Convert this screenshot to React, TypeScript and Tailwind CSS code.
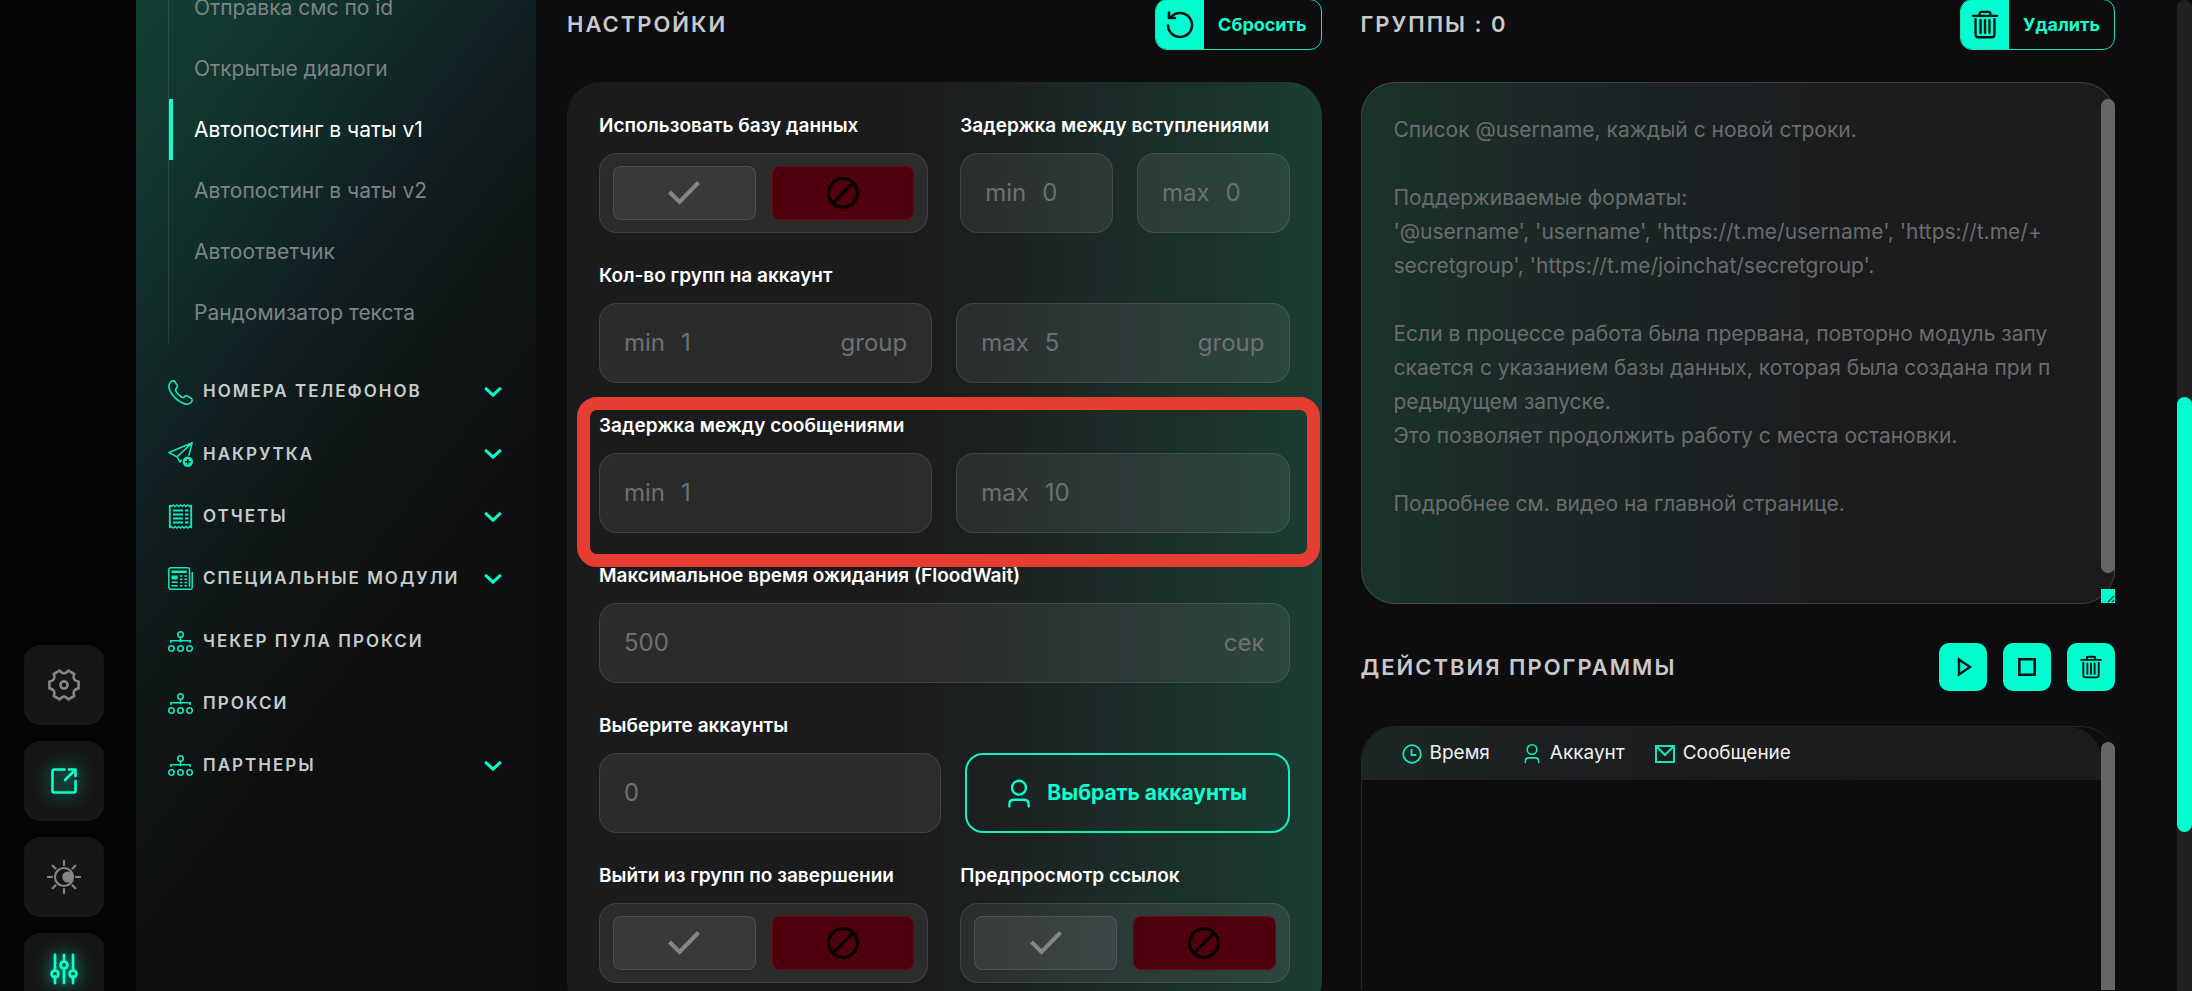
import { useState } from "react";
import type { ReactNode } from "react";

type IconProps = { className?: string };

type MenuEntry = {
  label: string;
  icon: ReactNode;
  expandable: boolean;
};

const SUB_ITEMS = [
  "Отправка смс по id",
  "Открытые диалоги",
  "Автопостинг в чаты v1",
  "Автопостинг в чаты v2",
  "Автоответчик",
  "Рандомизатор текста",
];

const GROUPS_PLACEHOLDER = `Список @username, каждый с новой строки.

Поддерживаемые форматы:
'@username', 'username', 'https://t.me/username', 'https://t.me/+
secretgroup', 'https://t.me/joinchat/secretgroup'.

Если в процессе работа была прервана, повторно модуль запу
скается с указанием базы данных, которая была создана при п
редыдущем запуске.
Это позволяет продолжить работу с места остановки.

Подробнее см. видео на главной странице.`;

function PhoneIcon() {
  return (
    <svg aria-hidden="true" className="size-[25px]" viewBox="0 0 25 25" fill="none" stroke="currentColor" strokeWidth="1.6" strokeLinejoin="round">
      <path d="M2.6 2.2C4 .6 6 .4 7 1.8l2 3.4c.7 1.2.3 2.3-.7 3.1-1.100.9-1 1.800-.3 3.100 1.300 2.300 3.200 4.200 5.500 5.600 1.300.8 2.200.8 3-.3.8-1 2-1.300 3.100-.6l3.400 2.100c1.500 1 1.400 2.900 0 4.300-2 2-5 2.200-8.400.5C9.400 20.600 4.300 15.500 1.800 10.300.2 6.900.7 4.300 2.600 2.200z" />
    </svg>
  );
}

function PlaneIcon() {
  return (
    <svg aria-hidden="true" className="size-[25px]" viewBox="0 0 25 25" fill="none" stroke="currentColor" strokeWidth="1.5" strokeLinejoin="round">
      <path d="M24.2.8 1 10.5l8 4.4L24.2.8zM24.2.8 9 14.9l3 5.3 1.5-2.6M24.2.8l-3.4 13" />
      <circle cx="19.8" cy="19.8" r="5.2" fill="currentColor" stroke="none" />
      <path d="M19.8 17v5.6M17 19.8h5.6" stroke="#101a1b" />
    </svg>
  );
}

function ReportIcon() {
  return (
    <svg aria-hidden="true" className="size-[25px]" viewBox="0 0 25 25" fill="none" stroke="currentColor" strokeWidth="1.4">
      <path d="M1.8 1v23M23.2 1v23" strokeWidth="1.8" />
      <path d="m1.5 1 1.8 1.5L5.2 1 7 2.500 8.900 1l1.800 1.500L12.500 1l1.800 1.500L16.100 1l1.800 1.500L19.800 1l1.800 1.500L23.500 1M1.500 24l1.800-1.500L5.200 24 7 22.500 8.900 24l1.800-1.500 1.800 1.500 1.800-1.500 1.800 1.500 1.800-1.500 1.900 1.500 1.800-1.500 1.900 1.500" />
      <path d="M5 6.500h10M5 10.500h10M5 14.500h10M5 18.500h10M17 6.500h3.500M17 10.500h3.500M17 14.500h3.500M17 18.500h3.500" strokeWidth="2" />
    </svg>
  );
}

function NewsIcon() {
  return (
    <svg aria-hidden="true" className="size-[25px]" viewBox="0 0 25 25" fill="none" stroke="currentColor" strokeWidth="1.5">
      <path d="M21.5 21V3.5a1.7 1.7 0 0 0-1.7-1.7H2.5A1.7 1.7 0 0 0 .8 3.5V21A2.2 2.2 0 0 0 3 23.2h19.5c1 0 1.7-.7 1.7-1.7V6" />
      <path d="M3.5 5.8h15.2" strokeWidth="2.6" />
      <path d="M3.5 11.5h6.2" strokeWidth="4" />
      <path d="M3.5 16.3h6.2M3.5 19.8h6.2M12 10h2.5M16.5 10H19M12 13.2h2.5M16.5 13.2H19M12 16.5h2.5M16.5 16.5H19M12 19.8h2.5M16.5 19.8H19" />
    </svg>
  );
}

function NetworkIcon() {
  return (
    <svg aria-hidden="true" className="size-[25px]" viewBox="0 0 25 25" fill="none" stroke="currentColor" strokeWidth="1.6">
      <circle cx="12.5" cy="5.5" r="2.7" />
      <circle cx="3.4" cy="19.5" r="2.7" />
      <circle cx="12.5" cy="19.5" r="2.7" />
      <circle cx="21.6" cy="19.5" r="2.7" />
      <path d="M12.5 8.2v5M2.9 14v-2.3h19.2V14" />
    </svg>
  );
}

function ChevronIcon() {
  return (
    <svg aria-hidden="true" className="h-3 w-[18px] text-[#00ffcc]" viewBox="0 0 18 12" fill="none" stroke="currentColor" strokeWidth="3">
      <path d="m1.2 1.8 7.800 7.400 7.800-7.400" />
    </svg>
  );
}

function TrashIcon({ className }: IconProps) {
  return (
    <svg aria-hidden="true" className={className} viewBox="0 0 28 30" fill="none" stroke="currentColor" strokeWidth="2.400" strokeLinecap="round" strokeLinejoin="round">
      <path d="M1.5 6h25M8.5 5.500V3.800c0-1 .8-1.800 1.800-1.800h7.400c1 0 1.800.8 1.800 1.800v1.700" />
      <path d="M4.200 9.500v15.800c0 1.700 1.200 2.900 2.900 2.900h13.800c1.700 0 2.900-1.200 2.900-2.900V9.500" />
      <path d="M9.400 10.500v13.300M14 10.500v13.300M18.600 10.500v13.300" />
    </svg>
  );
}

function ResetIcon() {
  return (
    <svg aria-hidden="true" className="size-7" viewBox="0 0 28 28" fill="none" stroke="currentColor" strokeWidth="2.6" strokeLinecap="round" strokeLinejoin="round">
      <path d="M5 6A12 12 0 1 1 2 14.5" />
      <path d="M3 1.500V7h6" />
    </svg>
  );
}

function UserIcon({ className }: IconProps) {
  return (
    <svg aria-hidden="true" className={className} viewBox="0 0 24 30" fill="none" stroke="currentColor" strokeWidth="2.4" strokeLinecap="round">
      <circle cx="12" cy="9" r="7.2" />
      <path d="M2 28.5v-2c0-3 2-5 5-5h10c3 0 5 2 5 5v2" />
    </svg>
  );
}

const MENU: MenuEntry[] = [
  { label: "Номера телефонов", icon: <PhoneIcon />, expandable: true },
  { label: "Накрутка", icon: <PlaneIcon />, expandable: true },
  { label: "Отчеты", icon: <ReportIcon />, expandable: true },
  { label: "Специальные модули", icon: <NewsIcon />, expandable: true },
  { label: "Чекер пула прокси", icon: <NetworkIcon />, expandable: false },
  { label: "Прокси", icon: <NetworkIcon />, expandable: false },
  { label: "Партнеры", icon: <NetworkIcon />, expandable: true },
];

function RailButton({ label, active = false, children }: { label: string; active?: boolean; children: ReactNode }) {
  return (
    <button
      aria-label={label}
      className={[
        "grid size-20 place-items-center rounded-2xl bg-[#161616]",
        active ? "text-[#0cffcc] [&>svg]:drop-shadow-[0_0_9px_#00e0b0]" : "text-[#858585]",
      ].join(" ")}
      type="button"
    >
      {children}
    </button>
  );
}

function Rail() {
  return (
    <aside className="flex w-[136px] shrink-0 flex-col justify-end bg-[#040404] pl-6">
      <div className="-mb-[22px] flex flex-col gap-4">
        <RailButton label="Настройки">
          <svg aria-hidden="true" className="size-8" viewBox="0 0 32 32" fill="none" stroke="currentColor" strokeWidth="2.6" strokeLinejoin="round">
            <path d="M30.600 12.600V19.400Q23.800 20.500 26.200 27L20.400 30.300Q16 25 11.600 30.300L5.800 27Q8.200 20.500 1.400 19.400V12.600Q8.200 11.500 5.800 5L11.600 1.700Q16 7 20.400 1.700L26.200 5Q23.800 11.500 30.600 12.600z" />
            <circle cx="16" cy="16" r="3.6" />
          </svg>
        </RailButton>
        <RailButton active label="Открыть">
          <svg aria-hidden="true" className="size-[26px]" viewBox="0 0 26 26" fill="none" stroke="currentColor" strokeWidth="2.6" strokeLinecap="round" strokeLinejoin="round">
            <path d="M13.5 1.5H3A1.5 1.5 0 0 0 1.5 3v20A1.5 1.5 0 0 0 3 24.5h20a1.5 1.5 0 0 0 1.5-1.5V13M18 1.5h6.5V8M24 2 14 12" />
          </svg>
        </RailButton>
        <RailButton label="Тема">
          <svg aria-hidden="true" className="size-[34px]" viewBox="0 0 34 34" fill="none" stroke="currentColor" strokeWidth="2.2" strokeLinecap="round">
            <circle cx="17" cy="17" r="9" />
            <circle cx="20.8" cy="17" r="5.6" fill="currentColor" stroke="none" />
            <path d="M17 1v4M17 29v4M1 17h4M29 17h4M5.700 5.700l2.800 2.800M25.500 25.500l2.800 2.800M5.700 28.300l2.800-2.800M25.500 8.500l2.800-2.800" />
          </svg>
        </RailButton>
        <RailButton active label="Фильтры">
          <svg aria-hidden="true" className="h-8 w-7 -translate-y-1" viewBox="0 0 28 32" fill="none" stroke="currentColor" strokeWidth="2.8" strokeLinecap="round">
            <path d="M5 2v14.500M5 23.500V30M14 2v6.500M14 15.500V30M23 2v14.500M23 23.500V30" />
            <circle cx="5" cy="21" r="3.4" />
            <circle cx="14" cy="12" r="3.4" />
            <circle cx="23" cy="21" r="3.4" />
          </svg>
        </RailButton>
      </div>
    </aside>
  );
}

function Sidebar() {
  return (
    <nav className="w-[400px] shrink-0 bg-[linear-gradient(128deg,#134035_0%,#112b28_24%,#101f21_34%,#101817_46%,#0e0f10_62%)] pl-8 pr-[34px]">
      <ul className="-mt-[23px] border-l border-white/10">
        {SUB_ITEMS.map((item) => {
          const isActive = item === "Автопостинг в чаты v1";
          return (
            <li
              className={[
                "flex h-[61px] items-center border-l-4 pl-[21px] text-[21px]",
                isActive ? "border-[#0cffcc] text-white" : "border-transparent text-[#7d8485]",
              ].join(" ")}
              key={item}
            >
              <a href="#">{item}</a>
            </li>
          );
        })}
      </ul>
      <ul className="mt-[18px] flex h-[436px] flex-col">
        {MENU.map(({ label, icon, expandable }) => (
          <li className="flex flex-1" key={label}>
            <button className="flex w-full items-center gap-[10px] text-[#14e8bd]" type="button">
              {icon}
              <span className="flex-1 whitespace-nowrap text-left text-[17px] font-semibold uppercase tracking-[2px] text-[#c6cccc]">
                {label}
              </span>
              {expandable ? <ChevronIcon /> : null}
            </button>
          </li>
        ))}
      </ul>
    </nav>
  );
}

function SectionTitle({ children }: { children: ReactNode }) {
  return <h2 className="whitespace-nowrap text-[22px] font-semibold uppercase tracking-[2px] text-[#c9c9cb]">{children}</h2>;
}

function SplitButton({ label, icon }: { label: string; icon: ReactNode }) {
  return (
    <button
      className="flex h-[51px] items-stretch overflow-hidden rounded-xl border border-[#1ee0b6] text-[18px] font-bold text-[#0cffcc]"
      type="button"
    >
      <span className="grid w-12 place-items-center bg-[#00ffd0] text-[#0d1413]">{icon}</span>
      <span className="flex items-center px-[14px]">{label}</span>
    </button>
  );
}

function Row({ className = "", children }: { className?: string; children: ReactNode }) {
  return <div className={`relative grid ${className}`}>{children}</div>;
}

function FieldTitle({ children }: { children: ReactNode }) {
  return <h3 className="mb-3 h-[30px] whitespace-nowrap text-[19px] font-semibold leading-[30px] text-white">{children}</h3>;
}

type NumberFieldProps = {
  name: string;
  placeholder: string;
  prefix?: string;
  suffix?: string;
};

function NumberField({ name, placeholder, prefix, suffix }: NumberFieldProps) {
  return (
    <label className="flex h-20 min-w-0 items-center gap-4 rounded-[18px] border border-white/10 bg-white/[0.07] px-6 text-[24px] text-[#6c7172]">
      {prefix ? <span>{prefix}</span> : null}
      <input
        aria-label={name}
        className="w-0 min-w-0 flex-1 bg-transparent outline-none placeholder:text-[#6c7172] placeholder:opacity-100"
        placeholder={placeholder}
        type="text"
      />
      {suffix ? <span>{suffix}</span> : null}
    </label>
  );
}

function YesNo({ name }: { name: string }) {
  const [value, setValue] = useState(false);

  return (
    <div aria-label={name} className="grid h-20 grid-cols-2 gap-4 rounded-[18px] border border-white/10 bg-white/[0.07] px-[13px] py-3" role="group">
      <button
        aria-label="Да"
        aria-pressed={value}
        className="grid place-items-center rounded-lg border border-white/10 bg-white/[0.07] text-[#858787]"
        type="button"
        onClick={() => setValue(true)}
      >
        <svg aria-hidden="true" className="h-6 w-8" viewBox="0 0 32 24" fill="none" stroke="currentColor" strokeWidth="4">
          <path d="m1.500 11 10 10L30.500 1.500" />
        </svg>
      </button>
      <button
        aria-label="Нет"
        aria-pressed={!value}
        className="grid place-items-center rounded-lg border border-[#6a0614] bg-[#50000c] text-black"
        type="button"
        onClick={() => setValue(false)}
      >
        <svg aria-hidden="true" className="size-8" viewBox="0 0 32 32" fill="none" stroke="currentColor" strokeWidth="3">
          <circle cx="16" cy="16" r="14.400" />
          <path d="M5.800 26.200 26.200 5.800" />
        </svg>
      </button>
    </div>
  );
}

function SettingsPanel() {
  return (
    <section>
      <header className="flex h-[51px] items-center justify-between">
        <SectionTitle>Настройки</SectionTitle>
        <SplitButton icon={<ResetIcon />} label="Сбросить" />
      </header>
      <div className="mt-8 flex flex-col gap-7 rounded-[34px] bg-[linear-gradient(90deg,#1b1b1d_0%,#1b1b1c_45%,#1c2121_58%,#1b2b28_72%,#1b332c_86%,#1b3d34_100%)] px-8 pb-8 pt-[29px]">
        <Row className="grid-cols-2 gap-x-8">
          <div>
            <FieldTitle>Использовать базу данных</FieldTitle>
            <YesNo name="Использовать базу данных" />
          </div>
          <div>
            <FieldTitle>Задержка между вступлениями</FieldTitle>
            <div className="grid grid-cols-2 gap-6">
              <NumberField name="Минимальная задержка между вступлениями" placeholder="0" prefix="min" />
              <NumberField name="Максимальная задержка между вступлениями" placeholder="0" prefix="max" />
            </div>
          </div>
        </Row>
        <Row>
          <FieldTitle>Кол-во групп на аккаунт</FieldTitle>
          <div className="grid grid-cols-2 gap-6">
            <NumberField name="Минимум групп" placeholder="1" prefix="min" suffix="group" />
            <NumberField name="Максимум групп" placeholder="5" prefix="max" suffix="group" />
          </div>
        </Row>
        <Row>
          <FieldTitle>Задержка между сообщениями</FieldTitle>
          <div className="grid grid-cols-2 gap-6">
            <NumberField name="Минимальная задержка между сообщениями" placeholder="1" prefix="min" />
            <NumberField name="Максимальная задержка между сообщениями" placeholder="10" prefix="max" />
          </div>
          <div className="pointer-events-none absolute -bottom-[34px] -left-[22px] -right-[30px] -top-[14px] rounded-[20px] border-[13px] border-[#e53d31]" />
        </Row>
        <Row>
          <FieldTitle>Максимальное время ожидания (FloodWait)</FieldTitle>
          <NumberField name="Максимальное время ожидания" placeholder="500" suffix="сек" />
        </Row>
        <Row>
          <FieldTitle>Выберите аккаунты</FieldTitle>
          <div className="grid grid-cols-[342fr_325fr] gap-6">
            <NumberField name="Количество аккаунтов" placeholder="0" />
            <button
              className="flex h-20 items-center justify-center gap-4 whitespace-nowrap rounded-[18px] border-2 border-[#12f0c4] text-[21px] font-bold text-[#0cffcc]"
              type="button"
            >
              <UserIcon className="h-[29px] w-6" />
              Выбрать аккаунты
            </button>
          </div>
        </Row>
        <Row className="grid-cols-2 gap-x-8">
          <div>
            <FieldTitle>Выйти из групп по завершении</FieldTitle>
            <YesNo name="Выйти из групп по завершении" />
          </div>
          <div>
            <FieldTitle>Предпросмотр ссылок</FieldTitle>
            <YesNo name="Предпросмотр ссылок" />
          </div>
        </Row>
      </div>
    </section>
  );
}

function GroupsPanel() {
  return (
    <section>
      <header className="flex h-[51px] items-center justify-between">
        <SectionTitle>Группы : 0</SectionTitle>
        <SplitButton icon={<TrashIcon className="h-[29px] w-7" />} label="Удалить" />
      </header>
      <div className="relative mt-8 h-[522px]">
        <textarea
          aria-label="Список групп"
          className="block size-full resize-none overflow-hidden whitespace-pre rounded-[34px] border border-white/15 bg-[linear-gradient(90deg,#1a322a_0%,#1b2927_22%,#1b2122_45%,#1c1b1d_65%,#1c1a1d_100%)] px-8 py-[30px] text-[21px] leading-[34px] outline-none placeholder:text-[#696d6e] placeholder:opacity-100"
          placeholder={GROUPS_PLACEHOLDER}
        />
        <div className="absolute bottom-[31px] right-0 top-[17px] w-[14px] rounded-full bg-[#676568]" />
        <div className="absolute bottom-px right-0 grid size-[14px] place-items-end bg-[#00ffd0]">
          <svg aria-hidden="true" className="size-2" viewBox="0 0 8 8" stroke="#0d3d33" strokeWidth="1.2">
            <path d="M1 7 7 1M5 7l2-2" />
          </svg>
        </div>
      </div>
    </section>
  );
}

function IconButton({ label, children }: { label: string; children: ReactNode }) {
  return (
    <button aria-label={label} className="grid size-12 place-items-center rounded-[10px] bg-[#00ffd0] text-[#0d1413]" type="button">
      {children}
    </button>
  );
}

function ActionsPanel() {
  return (
    <section className="mt-[39px] flex min-h-0 flex-1 flex-col">
      <header className="flex h-12 items-center justify-between">
        <SectionTitle>Действия программы</SectionTitle>
        <div className="flex gap-4">
          <IconButton label="Запустить">
            <svg aria-hidden="true" className="size-5" viewBox="0 0 20 20" fill="none" stroke="currentColor" strokeWidth="2.4">
              <path d="M6 2.500v15L17 10z" />
            </svg>
          </IconButton>
          <IconButton label="Остановить">
            <svg aria-hidden="true" className="size-[18px]" viewBox="0 0 18 18" fill="none" stroke="currentColor" strokeWidth="2.6">
              <path d="M1.300 1.300h15.400v15.400H1.300z" />
            </svg>
          </IconButton>
          <IconButton label="Очистить">
            <TrashIcon className="h-6 w-[22px]" />
          </IconButton>
        </div>
      </header>
      <div className="relative mt-[35px] min-h-0 flex-1 rounded-t-[34px] border-l border-t border-white/10 pr-[13px]">
        <table className="w-full overflow-hidden rounded-t-[34px] bg-[linear-gradient(90deg,#1b2724_0%,#1b1f20_24%,#1c1b1d_50%,#1b1b1c_100%)]">
          <thead>
            <tr className="h-[53px] text-left text-[19px] text-[#f0f0f0]">
              <th className="w-px whitespace-nowrap pl-10 font-normal">
                <span className="flex items-center gap-2">
                  <svg aria-hidden="true" className="size-5 text-[#14e8bd]" viewBox="0 0 20 20" fill="none" stroke="currentColor" strokeWidth="1.800">
                    <circle cx="10" cy="10" r="8.800" />
                    <path d="M9.500 5v6h4.800" />
                  </svg>
                  Время
                </span>
              </th>
              <th className="w-px whitespace-nowrap pl-[34px] font-normal">
                <span className="flex items-center gap-[10px]">
                  <UserIcon className="h-[21px] w-4 text-[#14e8bd]" />
                  Аккаунт
                </span>
              </th>
              <th className="whitespace-nowrap pl-[30px] font-normal">
                <span className="flex items-center gap-2">
                  <svg aria-hidden="true" className="h-[18px] w-5 text-[#14e8bd]" viewBox="0 0 20 18" fill="none" stroke="currentColor" strokeWidth="2">
                    <path d="M1 1h18v16H1zM1 1l9 9 9-9" />
                  </svg>
                  Сообщение
                </span>
              </th>
            </tr>
          </thead>
        </table>
        <div className="absolute bottom-0 right-0 top-[15px] w-[14px] rounded-t-full bg-[#676767]" />
      </div>
    </section>
  );
}

function PageScrollbar() {
  return (
    <div className="w-[15px] shrink-0 rounded-t-full bg-[#212022] pt-[397px]">
      <div className="h-[435px] rounded-full bg-[#00ffd0]" />
    </div>
  );
}

export default function App() {
  return (
    <div className="flex h-screen overflow-hidden bg-[#0d0d0f] font-['Inter','Noto_Sans',sans-serif]">
      <Rail />
      <Sidebar />
      <main className="-mt-px grid min-w-0 flex-1 grid-cols-2 gap-[39px] pl-[31px] pr-[62px]">
        <SettingsPanel />
        <div className="flex h-screen flex-col">
          <GroupsPanel />
          <ActionsPanel />
        </div>
      </main>
      <PageScrollbar />
    </div>
  );
}
